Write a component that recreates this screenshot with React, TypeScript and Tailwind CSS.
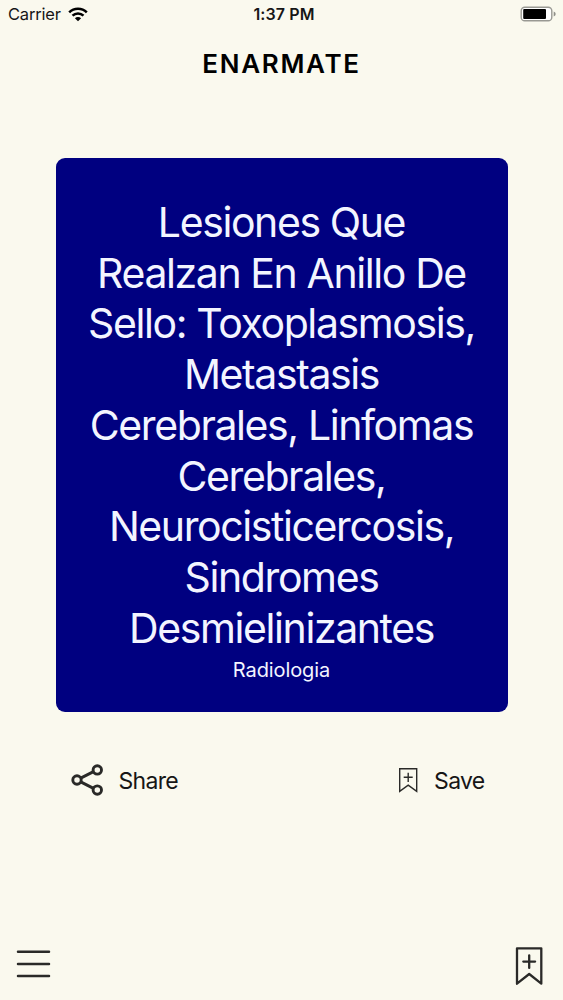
import type { ReactNode } from "react";

const titleLines = [
  "Lesiones Que",
  "Realzan En Anillo De",
  "Sello: Toxoplasmosis,",
  "Metastasis",
  "Cerebrales, Linfomas",
  "Cerebrales,",
  "Neurocisticercosis,",
  "Sindromes",
  "Desmielinizantes",
];

export default function App() {
  return (
    <div className="flex h-[1000px] w-[563px] flex-col overflow-hidden bg-[#faf9ee] font-['Inter',sans-serif] text-[#161616]">
      <StatusBar />

      <header className="flex h-[70px] items-center justify-center pt-[2px]">
        <h1 className="text-[26px] leading-[30px] font-semibold tracking-[1.7px] text-black">
          ENARMATE
        </h1>
      </header>

      <main className="mx-[55.5px] mt-[59.5px]">
        <section className="flex h-[554.5px] flex-col items-center rounded-[9px] bg-[#000080] pt-[39.5px] text-[#f3f5ff]">
          <h2 className="text-center text-[41px] leading-[50.7px] font-normal tracking-[-1.4px] whitespace-nowrap">
            {titleLines.map((line) => (
              <span key={line} className="block">
                {line}
              </span>
            ))}
          </h2>
          <p className="mt-[5px] text-[20px] leading-6 tracking-[-0.1px]">Radiologia</p>
        </section>

        <div className="mt-[50px] flex h-9 items-center justify-between pr-[23px] pl-[15px]">
          <Action label="Share" icon={<ShareIcon />} gap="gap-[15px]" />
          <Action
            label="Save"
            icon={
              <svg viewBox="0 0 20 26" className="h-[26px] w-5" fill="none" stroke="#2a2a28" strokeWidth="1.4">
                <path d="M1.7 1.7h17v22.6l-8.5-6.2-8.5 6.2zM10.2 5.7v9.2M5.7 10.3h9" />
              </svg>
            }
            gap="gap-[16px]"
          />
        </div>
      </main>

      <footer className="mt-auto flex items-start justify-between pr-[19px] pb-[13px] pl-[16px]">
        <MenuIcon />
        <BookmarkIcon />
      </footer>
    </div>
  );
}

function StatusBar() {
  return (
    <div className="grid h-7 grid-cols-3 items-center pr-[7px] pl-[8px]">
      <div className="flex items-center gap-[7px]">
        <span className="text-[16.5px] leading-5 tracking-[-0.2px]">Carrier</span>
        <svg viewBox="0 0 20 15" className="h-[15px] w-5">
          <g fill="none" stroke="#000" strokeWidth="2.5">
            <path d="M1.2 5.4a12.5 12.5 0 0 1 17.6 0" />
            <path d="M4.5 8.7a7.8 7.8 0 0 1 11 0" />
          </g>
          <path d="M6.9 11.2a4.4 4.4 0 0 1 6.2 0L10 14.3z" fill="#000" />
        </svg>
      </div>
      <span className="pl-1 text-center text-[16px] leading-5 font-semibold tracking-[0.1px]">1:37 PM</span>
      <svg viewBox="0 0 36 16" className="h-4 w-9 justify-self-end">
        <rect x="1.2" y="1.2" width="30.6" height="13.6" rx="3.6" fill="#fff" stroke="#999993" strokeWidth="1.4" />
        <rect x="3.2" y="3" width="22.8" height="10" rx="1" fill="#000" />
        <path d="M33.7 5.5q2 .8 2 2.5t-2 2.5z" fill="#8f8f89" />
      </svg>
    </div>
  );
}

function Action({ label, icon, gap }: { label: string; icon: ReactNode; gap: string }) {
  return (
    <button className={`flex items-center ${gap}`}>
      {icon}
      <span className="pt-px text-[23px] leading-7 tracking-[-0.7px]">{label}</span>
    </button>
  );
}

function ShareIcon() {
  return (
    <svg viewBox="0 0 33 32" className="h-8 w-[33px]" fill="none" stroke="#2a2a28" strokeWidth="2.9">
      <path d="M10.2 13.9 22 7.9M10.2 18.1 22 24.1" />
      <circle cx="6" cy="16" r="4.2" />
      <circle cx="26.3" cy="5.9" r="4.2" />
      <circle cx="26.3" cy="26.1" r="4.2" />
    </svg>
  );
}

function BookmarkIcon() {
  return (
    <svg
      viewBox="0 0 30 41"
      className="h-[41px] w-[30px]"
      fill="none"
      stroke="#2a2a28"
      strokeWidth="2.3"
      strokeLinejoin="round"
      strokeLinecap="round"
    >
      <path d="M3 2.3h24.3v35.4L15.2 28 3 37.7z" />
      <path d="M15.2 9.3v12.6M9.3 15.6h11.8" />
    </svg>
  );
}

function MenuIcon() {
  return (
    <svg viewBox="0 0 35 30" className="mt-[3px] h-[30px] w-[35px]" stroke="#2a2a28" strokeWidth="2.5" strokeLinecap="round">
      <path d="M2 2.8h31M2 15h31M2 27.1h31" />
    </svg>
  );
}
